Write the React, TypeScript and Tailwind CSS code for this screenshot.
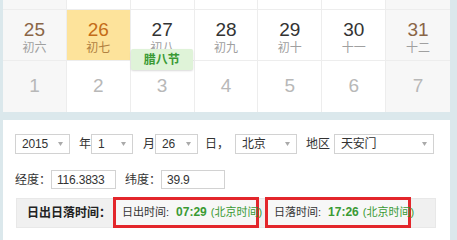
import React from 'react';

const font = { fontFamily: '"Liberation Sans", Arial, "Noto Sans CJK SC", sans-serif' };

interface Day {
  num: string;
  lunar: string;
  kind: 'weekend' | 'today' | 'normal';
}

const week: Day[] = [
  { num: '25', lunar: '初六', kind: 'weekend' },
  { num: '26', lunar: '初七', kind: 'today' },
  { num: '27', lunar: '初八', kind: 'normal' },
  { num: '28', lunar: '初九', kind: 'normal' },
  { num: '29', lunar: '初十', kind: 'normal' },
  { num: '30', lunar: '十一', kind: 'normal' },
  { num: '31', lunar: '十二', kind: 'weekend' },
];

const nextWeek = ['1', '2', '3', '4', '5', '6', '7'];

function Arrow() {
  return (
    <svg width="5" height="4" viewBox="0 0 5 4" className="shrink-0">
      <path d="M0 0h5L2.5 4z" fill="#aaa" />
    </svg>
  );
}

function Select({ value, w }: { value: string; w: string }) {
  return (
    <div className={`${w} h-[20px] shrink-0 border border-[#d2d2d2] bg-white flex items-center justify-between pl-[6px] pr-[6px] text-[12px] text-[#333] whitespace-nowrap`}>
      <span className="tracking-[-0.2px]">{value}</span>
      <Arrow />
    </div>
  );
}

function Calendar() {
  return (
    <div className="w-[447px] bg-white">
      {/* tail of previous row */}
      <div className="grid grid-cols-7 h-[10px] border-b border-[#ededed]">
        {week.map((d, i) => (
          <div key={i} className={`border-r border-[#ededed] last:border-r-0 ${d.kind === 'weekend' ? 'bg-[#f7f7f7]' : ''}`} />
        ))}
      </div>
      <div className="grid grid-cols-7 h-[51px] border-b border-[#ededed]">
        {week.map((d, i) => (
          <div
            key={i}
            className={`relative flex flex-col items-center pt-[9px] border-r border-[#ededed] last:border-r-0 ${
              d.kind === 'weekend' ? 'bg-[#f7f7f7]' : d.kind === 'today' ? 'bg-[#fde39b]' : ''
            }`}
          >
            <span
              className={`text-[19px] leading-[22px] ${
                d.kind === 'weekend' ? 'text-[#8a6648]' : d.kind === 'today' ? 'text-[#c46c18]' : 'text-[#333]'
              }`}
            >
              {d.num}
            </span>
            <span className={`text-[12px] leading-[14px] ${d.kind === 'today' ? 'text-[#b08040]' : 'text-[#a0a0a0]'}`}>
              {d.lunar}
            </span>
            {d.num === '27' && (
              <div className="absolute left-0 top-[39px] w-[62px] h-[21px] bg-[#dff3d8] rounded-[2px] shadow-[0_1px_2px_rgba(0,0,0,0.15)] flex items-center justify-center text-[12px] text-[#3a9a34] font-bold">
                腊八节
              </div>
            )}
          </div>
        ))}
      </div>
      <div className="grid grid-cols-7 h-[51px]">
        {nextWeek.map((n, i) => (
          <div
            key={i}
            className={`flex items-center justify-center text-[19px] text-[#b8b8b8] border-r border-[#ededed] last:border-r-0 ${
              i === 0 || i === 6 ? 'bg-[#f7f7f7]' : ''
            }`}
          >
            {n}
          </div>
        ))}
      </div>
    </div>
  );
}

function TimeBox({ label, time }: { label: string; time: string }) {
  return (
    <div className="relative top-[-1px] w-[146px] h-[31px] shrink-0 border-[3px] border-[#e3262b] bg-[#f7f7f7] flex items-center pl-[6px] text-[11px] whitespace-nowrap">
      <span className="text-[#333]">{label}:</span>
      <span className="ml-[7px] font-bold text-[#3a9a34] text-[12px]">{time}</span>
      <span className="ml-[4px] text-[#3a9a34]">(北京时间)</span>
    </div>
  );
}

export default function App() {
  return (
    <div className="w-[457px] h-[240px] bg-[#dbe8ec] pl-[3px] overflow-hidden" style={font}>
      <Calendar />
      <div className="mt-[8px] w-[447px] h-[120px] bg-white pl-[12px] pt-[14px] whitespace-nowrap">
        <div className="flex items-center h-[20px] text-[12px] text-[#333]">
          <Select value="2015" w="w-[55px]" />
          <span className="ml-[9px] w-[12px]">年</span>
          <Select value="1" w="w-[42px]" />
          <span className="ml-[10px] w-[12px]">月</span>
          <Select value="26" w="w-[43px]" />
          <span className="ml-[7px] w-[24px]">日，</span>
          <div className="ml-[6px]">
            <Select value="北京" w="w-[62px]" />
          </div>
          <span className="ml-[9px] w-[24px]">地区</span>
          <div className="ml-[4px]">
            <Select value="天安门" w="w-[100px]" />
          </div>
        </div>
        <div className="flex items-center h-[19px] mt-[16px] text-[12px] text-[#333]">
          <span className="w-[36px]">经度：</span>
          <div className="w-[65px] h-[19px] border border-[#d2d2d2] flex items-center pl-[5px] tracking-[-0.2px]">116.3833</div>
          <span className="ml-[9px] w-[36px]">纬度：</span>
          <div className="w-[64px] h-[19px] border border-[#d2d2d2] flex items-center pl-[5px] tracking-[-0.2px]">39.9</div>
        </div>
        <div className="mt-[9px] ml-[1px] w-[420px] h-[30px] bg-[#f0f0f0] border border-[#e8e8e8] flex items-center">
          <span className="ml-[10px] w-[86px] text-[12px] font-bold text-[#222]">日出日落时间：</span>
          <TimeBox label="日出时间" time="07:29" />
          <div className="ml-[6px]">
            <TimeBox label="日落时间" time="17:26" />
          </div>
        </div>
      </div>
    </div>
  );
}
